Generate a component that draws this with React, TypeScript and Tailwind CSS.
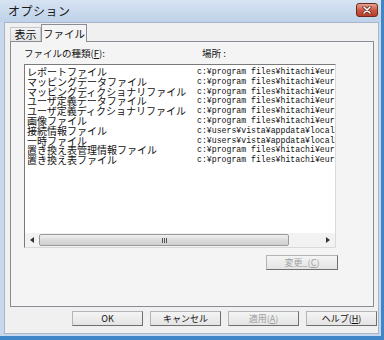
const jp = "font-['Meiryo','Noto_Sans_CJK_JP',sans-serif]";
const mono = "font-['Liberation_Mono','Noto_Sans_CJK_JP',monospace]";

const rows = [
  ["レポートファイル", "c:¥program files¥hitachi¥eur"],
  ["マッピングデータファイル", "c:¥program files¥hitachi¥eur"],
  ["マッピングディクショナリファイル", "c:¥program files¥hitachi¥eur"],
  ["ユーザ定義データファイル", "c:¥program files¥hitachi¥eur"],
  ["ユーザ定義ディクショナリファイル", "c:¥program files¥hitachi¥eur"],
  ["画像ファイル", "c:¥program files¥hitachi¥eur"],
  ["接続情報ファイル", "c:¥users¥vista¥appdata¥local¥"],
  ["一時ファイル", "c:¥users¥vista¥appdata¥local¥"],
  ["置き換え表管理情報ファイル", "c:¥program files¥hitachi¥eur"],
  ["置き換え表ファイル", "c:¥program files¥hitachi¥eur"],
];

const Button = ({ children, disabled = false, className = "" }: { children: React.ReactNode; disabled?: boolean; className?: string }) => (
  <div
    className={`w-[71px] h-[15px] flex items-center justify-center text-[9px] leading-none border border-[#b4b4b4] border-r-[#6f6f6f] border-b-[#6f6f6f] bg-gradient-to-b from-[#f4f4f4] to-[#e4e4e4] ${disabled ? "text-[#a0a0a0]" : "text-[#111]"} ${className}`}
  >
    {children}
  </div>
);

export default function App() {
  return (
    <div className={`w-[384px] h-[340px] flex flex-col bg-[#c8d8ec] border-r-[3px] border-b-[4px] border-[#3f86c8] ${jp}`}>
      {/* title bar */}
      <div className="h-[22px] flex items-center pl-[8px] pr-[3px] bg-gradient-to-b from-[#d6e3f2] to-[#bfd2e9]">
        <span className="text-[12px] text-[#1a1a1a] tracking-[0.5px]">オプション</span>
        <div className="ml-auto w-[22px] h-[14px] -mt-[3px] rounded-[3px] border border-[#6d2a1f] bg-gradient-to-b from-[#e7a193] via-[#c95a44] to-[#b83d28] flex items-center justify-center">
          <svg width="10" height="8" viewBox="0 0 10 8">
            <path d="M2 1 L8 7 M8 1 L2 7" stroke="#5a1e14" strokeWidth="3" strokeLinecap="round" />
            <path d="M2 1 L8 7 M8 1 L2 7" stroke="#ffffff" strokeWidth="1.6" strokeLinecap="round" />
          </svg>
        </div>
      </div>

      {/* client area */}
      <div className="h-[312px] ml-[4px] mr-[2px] bg-[#f0f0f0] border border-[#a8b6c8] pl-[5px] pt-[1px]">
        {/* tabs */}
        <div className="flex items-end h-[17px]">
          <div className="w-[31px] h-[14px] flex items-center justify-center text-[11px] text-[#111] border border-b-0 border-[#c4c7ce] bg-gradient-to-b from-[#f2f2f2] to-[#e6e6e6]">
            表示
          </div>
          <div className="relative z-10 -mb-px w-[46px] h-[18px] flex items-center justify-center text-[10.5px] text-[#111] border border-b-0 border-[#898c95] bg-[#f4f4f4]">
            ファイル
          </div>
        </div>

        {/* panel */}
        <div className="w-[364px] h-[266px] border border-[#898c95] bg-[#f4f4f4] pl-[13px] pt-[5px]">
          <div className="flex h-[17px] text-[9.5px] text-[#111] leading-[12px]">
            <span className="w-[178px]">
              ファイルの種類(<span className="underline">F</span>):
            </span>
            <span>場所 :</span>
          </div>

          {/* list */}
          <div className="w-[312px] h-[184px] flex flex-col bg-white border border-[#7a7a7a] border-r-[#dadada] border-b-[#dadada]">
            <div className="flex-1 flex pt-[2px] overflow-hidden">
              <div className="w-[172px] pl-[2px] text-[10px] leading-[9.8px] text-[#111] whitespace-nowrap">
                {rows.map((r, i) => (
                  <div key={i} className="h-[9.8px]">{r[0]}</div>
                ))}
              </div>
              <div className={`flex-1 overflow-hidden text-[8.2px] leading-[9.8px] text-[#111] whitespace-nowrap ${mono}`}>
                {rows.map((r, i) => (
                  <div key={i} className="h-[9.8px]">{r[1]}</div>
                ))}
              </div>
            </div>
            {/* horizontal scrollbar */}
            <div className="h-[14px] flex items-center bg-[#f2f2f2]">
              <div className="w-[14px] h-[14px] flex items-center justify-center">
                <svg width="4" height="6" viewBox="0 0 4 6"><path d="M4 0 L0 3 L4 6 Z" fill="#333" /></svg>
              </div>
              <div className="w-[250px] h-[12px] rounded-[2px] border border-[#9a9a9a] bg-gradient-to-b from-[#f0f0f0] via-[#dcdcdc] to-[#cfcfcf] flex items-center justify-center">
                <div className="flex gap-[1px]">
                  <div className="w-[1px] h-[5px] bg-[#555]" />
                  <div className="w-[1px] h-[5px] bg-[#555]" />
                  <div className="w-[1px] h-[5px] bg-[#555]" />
                </div>
              </div>
              <div className="flex-1" />
              <div className="w-[14px] h-[14px] flex items-center justify-center">
                <svg width="4" height="6" viewBox="0 0 4 6"><path d="M0 0 L4 3 L0 6 Z" fill="#333" /></svg>
              </div>
            </div>
          </div>

          <div className="mt-[7px] ml-[242px]">
            <Button disabled className="w-[72px]">
              変更_(<span className="underline">C</span>)
            </Button>
          </div>
        </div>

        {/* bottom buttons */}
        <div className="mt-[4px] flex gap-[7px] pl-[62px]">
          <Button>OK</Button>
          <Button>キャンセル</Button>
          <Button disabled>
            適用(<span className="underline">A</span>)
          </Button>
          <Button>
            ヘルプ(<span className="underline">H</span>)
          </Button>
        </div>
      </div>
    </div>
  );
}
